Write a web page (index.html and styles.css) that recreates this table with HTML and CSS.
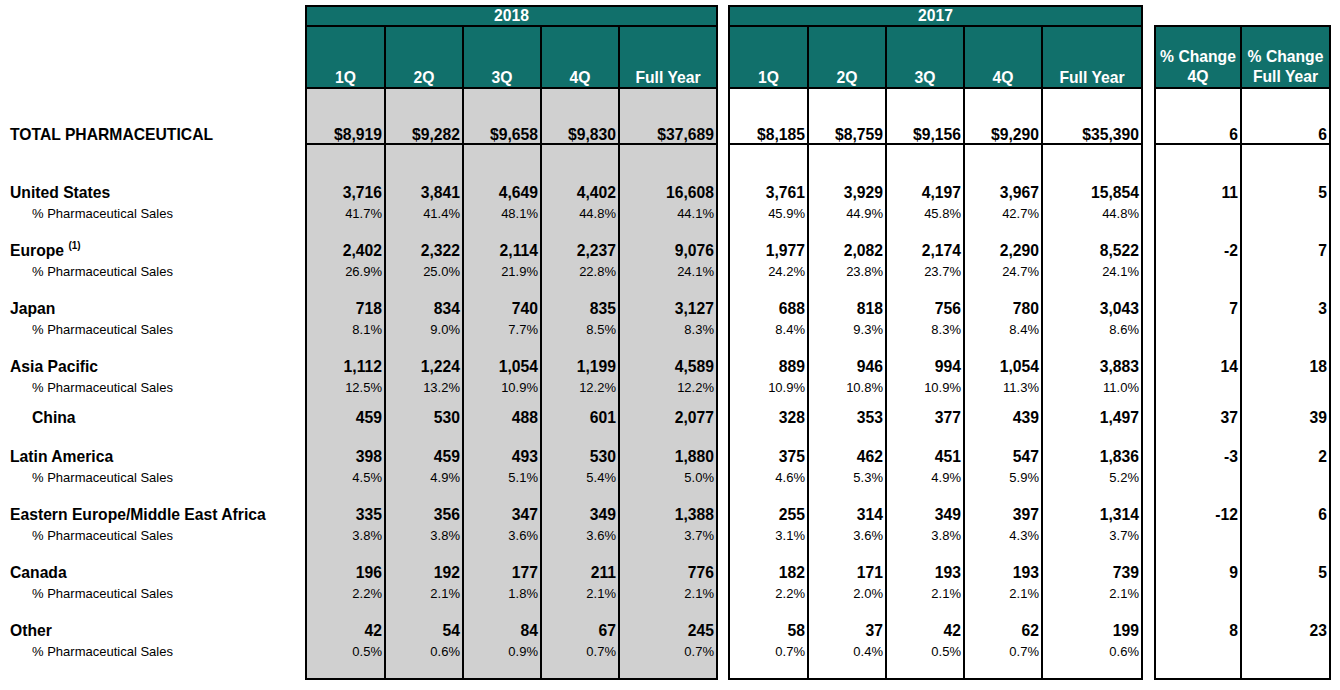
FILE: index.html
```html
<!DOCTYPE html>
<html lang="en">
<head>
<meta charset="utf-8">
<title>Pharmaceutical Sales by Region</title>
<link rel="stylesheet" href="styles.css">
</head>
<body>
<table class="sheet">
  <colgroup>
    <col class="w-label">
    <col class="w-q1"><col class="w-q"><col class="w-q"><col class="w-q"><col class="w-fy18">
    <col class="w-gap1">
    <col class="w-q1"><col class="w-q"><col class="w-q"><col class="w-q"><col class="w-fy17">
    <col class="w-gap2">
    <col class="w-p1"><col class="w-p2">
  </colgroup>
  <tbody>
    <tr class="year">
      <td></td>
      <td class="yr" colspan="5">2018</td>
      <td></td>
      <td class="yr" colspan="5">2017</td>
      <td></td>
      <td colspan="2"></td>
    </tr>
    <tr class="hdr">
      <td></td>
      <td class="b h">1Q</td><td class="b h">2Q</td><td class="b h">3Q</td><td class="b h">4Q</td><td class="b e h">Full Year</td>
      <td></td>
      <td class="b h">1Q</td><td class="b h">2Q</td><td class="b h">3Q</td><td class="b h">4Q</td><td class="b e h">Full Year</td>
      <td></td>
      <td class="b h two">% Change<br>4Q</td><td class="b e h two">% Change<br>Full Year</td>
    </tr>
    <tr class="total">
      <td class="lbl">TOTAL PHARMACEUTICAL</td>
      <td class="b g">$8,919</td><td class="b g">$9,282</td><td class="b g">$9,658</td><td class="b g">$9,830</td><td class="b g e">$37,689</td>
      <td></td>
      <td class="b">$8,185</td><td class="b">$8,759</td><td class="b">$9,156</td><td class="b">$9,290</td><td class="b e">$35,390</td>
      <td></td>
      <td class="b">6</td><td class="b e">6</td>
    </tr>

    <tr class="main first">
      <td class="lbl">United States</td>
      <td class="b g">3,716</td><td class="b g">3,841</td><td class="b g">4,649</td><td class="b g">4,402</td><td class="b g e">16,608</td>
      <td></td>
      <td class="b">3,761</td><td class="b">3,929</td><td class="b">4,197</td><td class="b">3,967</td><td class="b e">15,854</td>
      <td></td>
      <td class="b">11</td><td class="b e">5</td>
    </tr>
    <tr class="sub">
      <td class="slbl">% Pharmaceutical Sales</td>
      <td class="b g">41.7%</td><td class="b g">41.4%</td><td class="b g">48.1%</td><td class="b g">44.8%</td><td class="b g e">44.1%</td>
      <td></td>
      <td class="b">45.9%</td><td class="b">44.9%</td><td class="b">45.8%</td><td class="b">42.7%</td><td class="b e">44.8%</td>
      <td></td>
      <td class="b"></td><td class="b e"></td>
    </tr>

    <tr class="main">
      <td class="lbl">Europe <sup class="fn">(1)</sup></td>
      <td class="b g">2,402</td><td class="b g">2,322</td><td class="b g">2,114</td><td class="b g">2,237</td><td class="b g e">9,076</td>
      <td></td>
      <td class="b">1,977</td><td class="b">2,082</td><td class="b">2,174</td><td class="b">2,290</td><td class="b e">8,522</td>
      <td></td>
      <td class="b">-2</td><td class="b e">7</td>
    </tr>
    <tr class="sub">
      <td class="slbl">% Pharmaceutical Sales</td>
      <td class="b g">26.9%</td><td class="b g">25.0%</td><td class="b g">21.9%</td><td class="b g">22.8%</td><td class="b g e">24.1%</td>
      <td></td>
      <td class="b">24.2%</td><td class="b">23.8%</td><td class="b">23.7%</td><td class="b">24.7%</td><td class="b e">24.1%</td>
      <td></td>
      <td class="b"></td><td class="b e"></td>
    </tr>

    <tr class="main">
      <td class="lbl">Japan</td>
      <td class="b g">718</td><td class="b g">834</td><td class="b g">740</td><td class="b g">835</td><td class="b g e">3,127</td>
      <td></td>
      <td class="b">688</td><td class="b">818</td><td class="b">756</td><td class="b">780</td><td class="b e">3,043</td>
      <td></td>
      <td class="b">7</td><td class="b e">3</td>
    </tr>
    <tr class="sub">
      <td class="slbl">% Pharmaceutical Sales</td>
      <td class="b g">8.1%</td><td class="b g">9.0%</td><td class="b g">7.7%</td><td class="b g">8.5%</td><td class="b g e">8.3%</td>
      <td></td>
      <td class="b">8.4%</td><td class="b">9.3%</td><td class="b">8.3%</td><td class="b">8.4%</td><td class="b e">8.6%</td>
      <td></td>
      <td class="b"></td><td class="b e"></td>
    </tr>

    <tr class="main">
      <td class="lbl">Asia Pacific</td>
      <td class="b g">1,112</td><td class="b g">1,224</td><td class="b g">1,054</td><td class="b g">1,199</td><td class="b g e">4,589</td>
      <td></td>
      <td class="b">889</td><td class="b">946</td><td class="b">994</td><td class="b">1,054</td><td class="b e">3,883</td>
      <td></td>
      <td class="b">14</td><td class="b e">18</td>
    </tr>
    <tr class="sub">
      <td class="slbl">% Pharmaceutical Sales</td>
      <td class="b g">12.5%</td><td class="b g">13.2%</td><td class="b g">10.9%</td><td class="b g">12.2%</td><td class="b g e">12.2%</td>
      <td></td>
      <td class="b">10.9%</td><td class="b">10.8%</td><td class="b">10.9%</td><td class="b">11.3%</td><td class="b e">11.0%</td>
      <td></td>
      <td class="b"></td><td class="b e"></td>
    </tr>
    <tr class="main china">
      <td class="slbl">China</td>
      <td class="b g">459</td><td class="b g">530</td><td class="b g">488</td><td class="b g">601</td><td class="b g e">2,077</td>
      <td></td>
      <td class="b">328</td><td class="b">353</td><td class="b">377</td><td class="b">439</td><td class="b e">1,497</td>
      <td></td>
      <td class="b">37</td><td class="b e">39</td>
    </tr>

    <tr class="main after-china">
      <td class="lbl">Latin America</td>
      <td class="b g">398</td><td class="b g">459</td><td class="b g">493</td><td class="b g">530</td><td class="b g e">1,880</td>
      <td></td>
      <td class="b">375</td><td class="b">462</td><td class="b">451</td><td class="b">547</td><td class="b e">1,836</td>
      <td></td>
      <td class="b">-3</td><td class="b e">2</td>
    </tr>
    <tr class="sub">
      <td class="slbl">% Pharmaceutical Sales</td>
      <td class="b g">4.5%</td><td class="b g">4.9%</td><td class="b g">5.1%</td><td class="b g">5.4%</td><td class="b g e">5.0%</td>
      <td></td>
      <td class="b">4.6%</td><td class="b">5.3%</td><td class="b">4.9%</td><td class="b">5.9%</td><td class="b e">5.2%</td>
      <td></td>
      <td class="b"></td><td class="b e"></td>
    </tr>

    <tr class="main">
      <td class="lbl">Eastern Europe/Middle East Africa</td>
      <td class="b g">335</td><td class="b g">356</td><td class="b g">347</td><td class="b g">349</td><td class="b g e">1,388</td>
      <td></td>
      <td class="b">255</td><td class="b">314</td><td class="b">349</td><td class="b">397</td><td class="b e">1,314</td>
      <td></td>
      <td class="b">-12</td><td class="b e">6</td>
    </tr>
    <tr class="sub">
      <td class="slbl">% Pharmaceutical Sales</td>
      <td class="b g">3.8%</td><td class="b g">3.8%</td><td class="b g">3.6%</td><td class="b g">3.6%</td><td class="b g e">3.7%</td>
      <td></td>
      <td class="b">3.1%</td><td class="b">3.6%</td><td class="b">3.8%</td><td class="b">4.3%</td><td class="b e">3.7%</td>
      <td></td>
      <td class="b"></td><td class="b e"></td>
    </tr>

    <tr class="main">
      <td class="lbl">Canada</td>
      <td class="b g">196</td><td class="b g">192</td><td class="b g">177</td><td class="b g">211</td><td class="b g e">776</td>
      <td></td>
      <td class="b">182</td><td class="b">171</td><td class="b">193</td><td class="b">193</td><td class="b e">739</td>
      <td></td>
      <td class="b">9</td><td class="b e">5</td>
    </tr>
    <tr class="sub">
      <td class="slbl">% Pharmaceutical Sales</td>
      <td class="b g">2.2%</td><td class="b g">2.1%</td><td class="b g">1.8%</td><td class="b g">2.1%</td><td class="b g e">2.1%</td>
      <td></td>
      <td class="b">2.2%</td><td class="b">2.0%</td><td class="b">2.1%</td><td class="b">2.1%</td><td class="b e">2.1%</td>
      <td></td>
      <td class="b"></td><td class="b e"></td>
    </tr>

    <tr class="main">
      <td class="lbl">Other</td>
      <td class="b g">42</td><td class="b g">54</td><td class="b g">84</td><td class="b g">67</td><td class="b g e">245</td>
      <td></td>
      <td class="b">58</td><td class="b">37</td><td class="b">42</td><td class="b">62</td><td class="b e">199</td>
      <td></td>
      <td class="b">8</td><td class="b e">23</td>
    </tr>
    <tr class="sub last">
      <td class="slbl">% Pharmaceutical Sales</td>
      <td class="b g">0.5%</td><td class="b g">0.6%</td><td class="b g">0.9%</td><td class="b g">0.7%</td><td class="b g e">0.7%</td>
      <td></td>
      <td class="b">0.7%</td><td class="b">0.4%</td><td class="b">0.5%</td><td class="b">0.7%</td><td class="b e">0.6%</td>
      <td></td>
      <td class="b"></td><td class="b e"></td>
    </tr>
  </tbody>
</table>
</body>
</html>
```

FILE: styles.css
```css
html, body {
  margin: 0;
  padding: 0;
  background: #ffffff;
}

body {
  font-family: "Liberation Sans", Arial, sans-serif;
  color: #000000;
}

.sheet {
  margin-top: 5px;
  width: 1331px;
  table-layout: fixed;
  border-collapse: separate;
  border-spacing: 0;
}

.w-label { width: 305px; }
.w-q1 { width: 79px; }
.w-q { width: 78px; }
.w-fy18 { width: 100px; }
.w-fy17 { width: 102px; }
.w-gap1 { width: 10px; }
.w-gap2 { width: 11px; }
.w-p1 { width: 86px; }
.w-p2 { width: 91px; }

.sheet td {
  padding: 0 2px 0 0;
  vertical-align: bottom;
  text-align: right;
  white-space: nowrap;
}

.b { border-left: 2px solid #000; }
.e { border-right: 2px solid #000; }
.g { background: #d0d0d0; }

/* year band */
.year td {
  border-top: 2px solid transparent;
  font-size: 15.7px;
  line-height: 18px;
  font-weight: bold;
  color: #ffffff;
  text-align: center;
  padding: 0;
}
.year .yr {
  background: #11706b;
  border-top-color: #000;
  border-left: 2px solid #000;
  border-right: 2px solid #000;
}

/* column headers */
.hdr td {
  border-top: 2px solid transparent;
  font-size: 15.7px;
  line-height: 18px;
  font-weight: bold;
  color: #ffffff;
  text-align: center;
  padding: 42px 0 0 0;
}
.hdr .h {
  background: #11706b;
  border-top-color: #000;
}
.hdr .two {
  line-height: 20px;
  padding-top: 20px;
}

/* total row */
.total td {
  border-top: 2px solid transparent;
  font-size: 15.7px;
  line-height: 17px;
  font-weight: bold;
  padding-top: 37px;
}
.total .b { border-top-color: #000; }

/* body rows */
.main td {
  font-size: 15.7px;
  line-height: 20px;
  font-weight: bold;
  padding-top: 17px;
}
.main.first td {
  border-top: 2px solid transparent;
  padding-top: 38px;
}
.main.first .b { border-top-color: #000; }
.main.china td { padding-top: 10px; }
.main.after-china td { padding-top: 19px; }

.sub td {
  font-size: 13px;
  line-height: 20px;
  font-weight: normal;
  padding-top: 1px;
}
.sub.last td {
  padding-bottom: 16px;
  border-bottom: 2px solid transparent;
}
.sub.last .b { border-bottom-color: #000; }

/* labels */
.sheet .lbl {
  text-align: left;
  padding-left: 10px;
  font-weight: bold;
}
.sheet .slbl {
  text-align: left;
  padding-left: 32px;
}
.main .slbl { font-weight: bold; }

.fn {
  font-size: 10px;
  line-height: 0;
  vertical-align: 7px;
  font-weight: bold;
}
```
